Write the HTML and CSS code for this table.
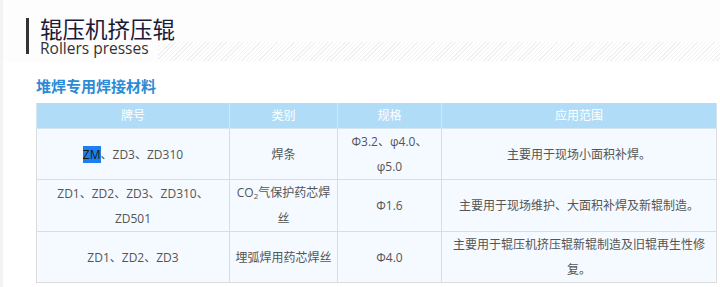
FILE: index.html
```html
<!DOCTYPE html>
<html lang="zh">
<head>
<meta charset="utf-8">
<link rel="stylesheet" href="styles.css">
</head>
<body>
<div class="page">
  <div class="head">
    <div class="bar"></div>
    <div class="head-title">
      <div class="cn">辊压机挤压辊</div>
      <div class="en">Rollers presses</div>
    </div>
    <div class="hatch"></div>
  </div>
  <div class="content">
    <h2 class="sec">堆焊专用焊接材料</h2>
    <table class="tbl">
      <colgroup>
        <col class="c1"><col class="c2"><col class="c3"><col class="c4">
      </colgroup>
      <thead>
        <tr><th>牌号</th><th>类别</th><th>规格</th><th>应用范围</th></tr>
      </thead>
      <tbody>
        <tr>
          <td><span class="sel">ZM</span>、ZD3、ZD310</td>
          <td>焊条</td>
          <td>Φ3.2、φ4.0、<br>φ5.0</td>
          <td>主要用于现场小面积补焊。</td>
        </tr>
        <tr>
          <td>ZD1、ZD2、ZD3、ZD310、<br>ZD501</td>
          <td>CO<sub>2</sub>气保护药芯焊<br>丝</td>
          <td>Φ1.6</td>
          <td>主要用于现场维护、大面积补焊及新辊制造。</td>
        </tr>
        <tr>
          <td>ZD1、ZD2、ZD3</td>
          <td>埋弧焊用药芯焊丝</td>
          <td>Φ4.0</td>
          <td>主要用于辊压机挤压辊新辊制造及旧辊再生性修<br>复。</td>
        </tr>
      </tbody>
    </table>
  </div>
</div>
</body>
</html>
```

FILE: styles.css
```css
html, body {
  margin: 0;
  padding: 0;
}
body {
  background: #f3f3f3;
  font-family: "Open Sans", "Noto Sans CJK SC", sans-serif;
}
.page {
  margin-left: 3px;
  background: #ffffff;
  height: 287px;
  overflow: hidden;
}
.head {
  display: flex;
  align-items: flex-start;
  padding: 16px 0 0 23px;
  height: 46px;
  background: #fdfdfd;
}
.bar {
  flex: none;
  width: 3px;
  height: 36px;
  margin-top: 2px;
  background: #333333;
}
.head-title {
  flex: none;
  width: 118px;
  margin-left: 11px;
  white-space: nowrap;
}
.cn {
  font-family: "Noto Sans CJK SC", sans-serif;
  font-size: 22.5px;
  line-height: 24px;
  color: #1a1a3a;
}
.en {
  font-family: "Open Sans", sans-serif;
  font-size: 15.5px;
  line-height: 16px;
  color: #333333;
}
.hatch {
  flex: 1;
  height: 19px;
  margin-top: 26px;
  background: repeating-linear-gradient(135deg, #f1f1f1 0 1px, #ffffff 1px 3px);
}
.content {
  padding: 14px 0 0 33px;
}
.sec {
  margin: 0 0 7px 0;
  font-family: "Noto Sans CJK SC", sans-serif;
  font-size: 15px;
  line-height: 20px;
  font-weight: bold;
  color: #2b8bd6;
}
.tbl {
  border-collapse: collapse;
  width: 680px;
  table-layout: fixed;
  font-size: 12px;
  color: #555555;
}
.c1 { width: 193px; }
.c2 { width: 108px; }
.c3 { width: 104px; }
.c4 { width: 275px; }
.tbl th {
  background: #b1dcf7;
  color: #ffffff;
  font-weight: normal;
  height: 25px;
  padding: 0;
  border: 1px solid #d6e6f0;
  border-top: none;
  line-height: 25px;
}
.tbl td {
  background: #f4faff;
  border: 1px solid #dcdcdc;
  text-align: center;
  height: 49px;
  padding: 0;
  line-height: 25px;
  vertical-align: middle;
}
.tbl td sub {
  font-size: 8px;
  vertical-align: baseline;
  position: relative;
  top: 2px;
}
.sel {
  background: #1e7ff0;
  color: #1a1a1a;
}
```
